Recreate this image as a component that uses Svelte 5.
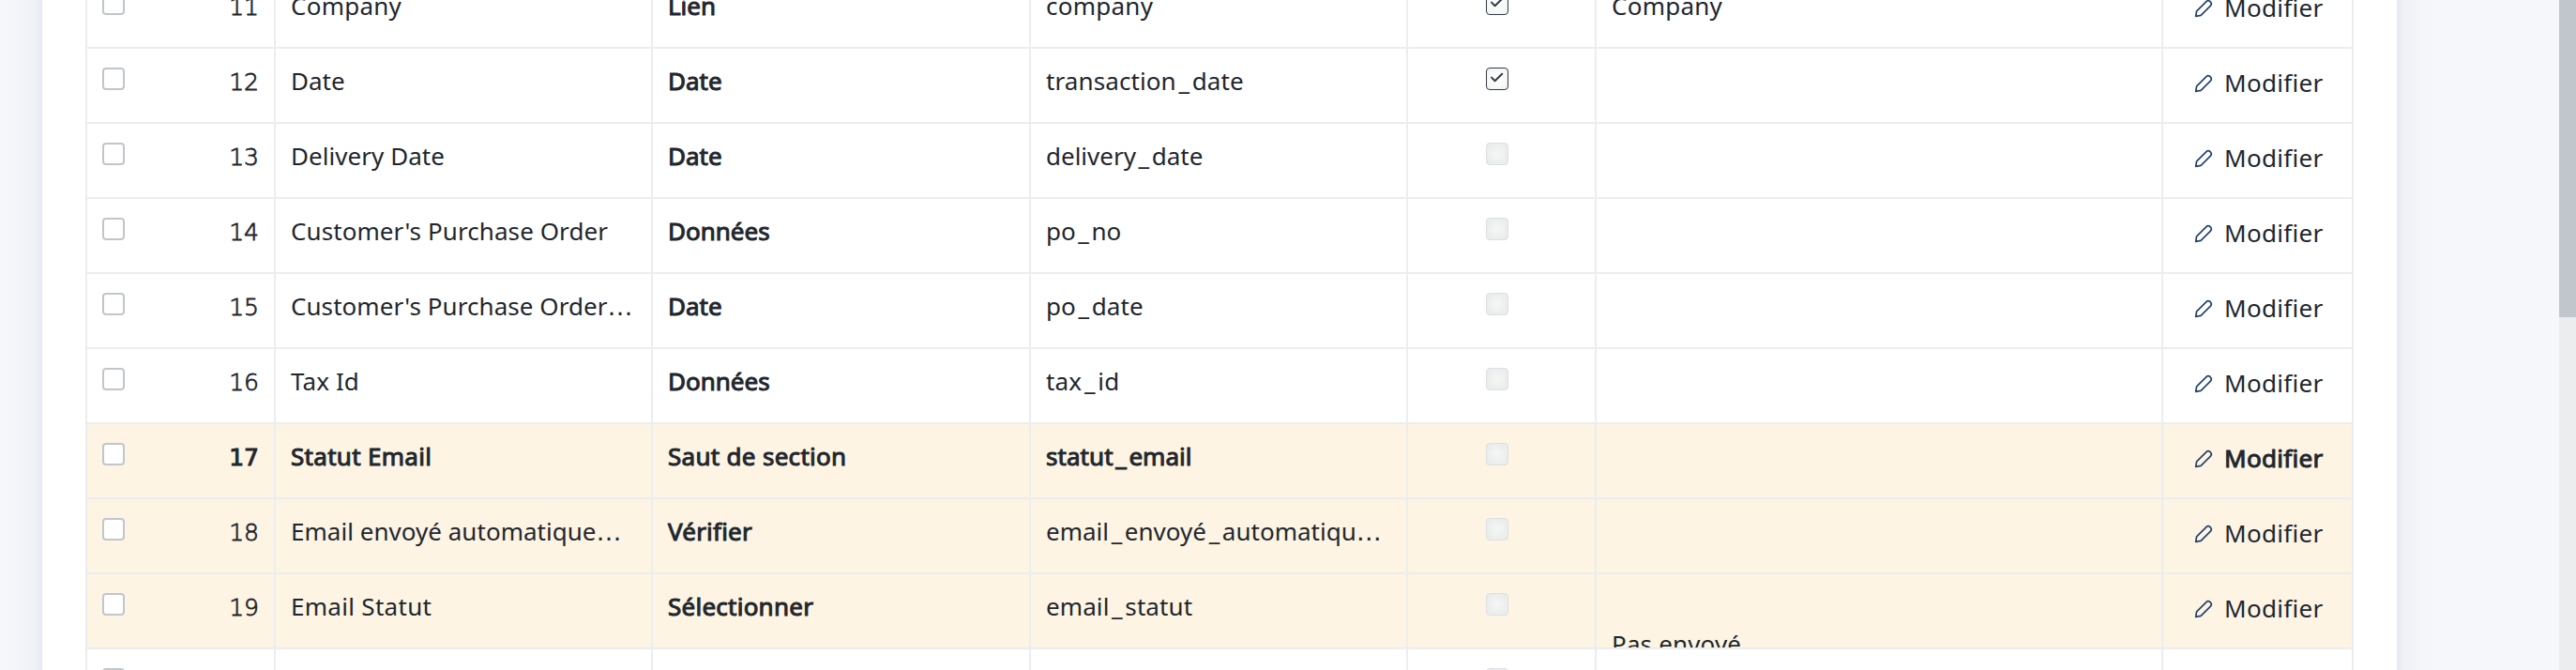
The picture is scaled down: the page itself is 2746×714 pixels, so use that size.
<script>
  // Each text is [content, tracking in px].
  const rows = [
    { n: 11, label: ['Company', 0.25], type: ['Lien', 0], name: ['company', 0.25], required: true, option: ['Company', 0.25] },
    { n: 12, label: ['Date', 0], type: ['Date', 0], name: ['transaction_date', 0.1], required: true },
    { n: 13, label: ['Delivery Date', 0.05], type: ['Date', 0], name: ['delivery_date', 0] },
    { n: 14, label: ["Customer's Purchase Order", 0.08], type: ['Données', 0], name: ['po_no', 0] },
    { n: 15, label: ["Customer's Purchase Order…", 0.06], type: ['Date', 0], name: ['po_date', 0.1] },
    { n: 16, label: ['Tax Id', 0.1], type: ['Données', 0], name: ['tax_id', 0.2] },
    { n: 17, label: ['Statut Email', 0.3], type: ['Saut de section', 0.3], name: ['statut_email', 0.05], custom: true, section: true },
    { n: 18, label: ['Email envoyé automatique…', 0.03], type: ['Vérifier', 0.2], name: ['email_envoyé_automatiqu…', 0.02], custom: true },
    { n: 19, label: ['Email Statut', 0.3], type: ['Sélectionner', 0.25], name: ['email_statut', 0.1], custom: true, option: ['Pas envoyé', 0.15], low: true },
    { n: 20 }
  ];
  const pieces = (s) => s.split(/([_…])/).filter(Boolean);
</script>

{#snippet text(item)}
  {#if item}
    <span class="text" style:letter-spacing="{item[1]}px">{#each pieces(item[0]) as p}{#if p === '_'}<span class="under">_</span>{:else if p === '…'}<span class="dots">…</span>{:else}{p}{/if}{/each}</span>
  {/if}
{/snippet}

<div class="page">
  <main class="card">
    <div class="table">
      {#each rows as row (row.n)}
        <div class="row" class:custom={row.custom} class:section={row.section}>
          <div class="cell index">
            <span class="check"></span>
            {#if row.label}<span class="num">{row.n}</span>{/if}
          </div>
          <div class="cell">{@render text(row.label)}</div>
          <div class="cell strong">{@render text(row.type)}</div>
          <div class="cell">{@render text(row.name)}</div>
          <div class="cell center">
            <span class="box" class:on={row.required}>
              {#if row.required}
                <svg viewBox="0 0 24 24" width="24" height="24"><path d="M6 10.6 9.6 14.2 17.2 6.8" /></svg>
              {/if}
            </span>
          </div>
          <div class="cell" class:low={row.low}>{@render text(row.option)}</div>
          <div class="cell edit">
            {#if row.label}
              <svg class="pencil" viewBox="0 0 20 20" width="20" height="20">
                <path d="M1.7 18.3 2.6 12.9 12.7 2.8C14 1.5 15.8 1.4 17.2 2.8 18.6 4.2 18.5 6 17.2 7.3L7.1 17.4Z" />
              </svg>
              {@render text(['Modifier', 0.3])}
            {/if}
          </div>
        </div>
      {/each}
    </div>
  </main>
  <div class="scrollbar"><div class="thumb"></div></div>
</div>

<style>
  :global(body) {
    margin: 0;
    overflow: hidden;
  }
  .page {
    display: flex;
    justify-content: space-between;
    width: 2746px;
    height: 714px;
    overflow: hidden;
    background: #f5f7fb;
    color: #1f272e;
    font: 26px/36px 'Noto Sans', sans-serif;
  }
  .card {
    box-sizing: border-box;
    width: 2510px;
    height: 900px;
    margin: -60px 0 0 45px;
    padding: 32px 46px 0;
    background: #fff;
    box-shadow: 0 0 10px rgba(17, 43, 66, 0.05), 0 4px 44px rgba(17, 43, 66, 0.07);
  }
  .table {
    width: 2416px;
    border-left: 2px solid #ebedef;
  }
  .row {
    display: grid;
    grid-template-columns: 201px 402px 403px 402px 201px 604px 203px;
    height: 80px;
  }
  .custom {
    background: #fdf4e3;
  }
  .cell {
    box-sizing: border-box;
    min-width: 0;
    height: 80px;
    padding: 16px 16px 0;
    overflow: hidden;
    border-right: 2px solid #ebedef;
    border-bottom: 2px solid #ebedef;
    white-space: nowrap;
  }
  .text {
    display: block;
    height: 36px;
  }
  .under {
    padding: 0 2.6px;
  }
  .dots {
    font: 27px/0 'DejaVu Sans', sans-serif;
  }
  .num {
    padding-top: 2px;
    font: 25px/36px 'DejaVu Sans', sans-serif;
    font-weight: 200;
    -webkit-text-stroke: 0.8px currentColor;
  }
  .section .num {
    font-weight: 400;
    -webkit-text-stroke: 1px currentColor;
  }
  .strong,
  .section .cell {
    -webkit-text-stroke: 1px currentColor;
  }
  .index {
    display: flex;
    justify-content: space-between;
    align-items: flex-start;
  }
  .check {
    box-sizing: border-box;
    width: 24px;
    height: 24px;
    margin-top: 4px;
    border: 2px solid #c0c6cc;
    border-radius: 4px;
    background: #fff;
  }
  .center {
    display: flex;
    justify-content: center;
  }
  .box {
    box-sizing: border-box;
    width: 24px;
    height: 24px;
    margin: 4px 9px 0 0;
    border: 1px solid #dce0e3;
    border-radius: 4px;
    background: radial-gradient(circle, #f5f6f6, #e8eaea);
  }
  .box.on {
    border: 1.5px solid #333c44;
    background: radial-gradient(circle, #fff, #f1f3f3);
  }
  .box svg {
    display: block;
    margin: -1px;
    fill: none;
    stroke: #333c44;
    stroke-width: 2;
    stroke-linecap: round;
    stroke-linejoin: round;
  }
  .low {
    padding-top: 56px;
  }
  .edit {
    display: flex;
    align-items: flex-start;
    gap: 12px;
    padding: 18px 0 0 33px;
  }
  .pencil {
    margin-top: 9px;
    fill: none;
    stroke: #24426b;
    stroke-width: 1.7;
    stroke-linejoin: round;
  }
  .scrollbar {
    width: 18px;
    background: #ebedee;
  }
  .thumb {
    height: 338px;
    background: #c0c6cb;
  }
</style>
